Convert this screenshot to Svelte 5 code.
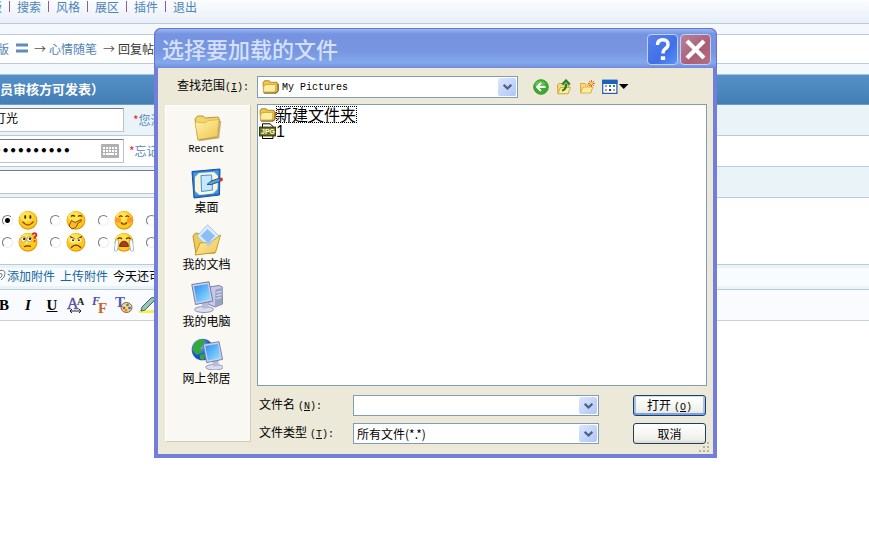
<script>
  const nav = ['排版', '搜索', '风格', '展区', '插件', '退出'];
  const moods = [
    ['smile', 'giggle', 'blush', 'cool'],
    ['doubt', 'angry', 'cry', 'sleep']
  ];
  const places = [
    { id: 'recent', name: 'Recent' },
    { id: 'desktop', name: '桌面' },
    { id: 'docs', name: '我的文档' },
    { id: 'computer', name: '我的电脑' },
    { id: 'network', name: '网上邻居' }
  ];
  let mood = $state('smile');
  let user = $state('灯光');
  let pass = $state('abcdefghij');
  let subject = $state('');
  let fileName = $state('');
</script>

{#snippet folder(size)}
  <svg width={size} height={size} viewBox="0 0 16 16" aria-hidden="true">
    <path d="M1 4.5 2.5 2.5H6.5L7.8 4H13.5L14.5 5V12.5L13.5 13.5H1.5Z" fill="#f0c850" stroke="#b98d28" />
    <path d="M1.5 13.3V8L3.5 6H13L12.8 12.2 11.5 13.3Z" fill="#ffee9e" stroke="#d8ae48" />
    <path d="M2 14.3H13.5L15.4 12V5.5" fill="none" stroke="#6e5a26" stroke-width=".9" />
  </svg>
{/snippet}

{#snippet chevron()}
  <span class="chev">
    <svg width="9" height="6" viewBox="0 0 9 6" aria-hidden="true"><path d="M.7.8 4.5 4.5 8.3.8" fill="none" stroke="#4d6185" stroke-width="2.2" /></svg>
  </span>
{/snippet}

{#snippet face(kind)}
  <svg width="20" height="20" viewBox="0 0 20 20" aria-hidden="true">
    <circle cx="10" cy="10.3" r="9.4" fill="#e39a10" />
    <circle cx="9.8" cy="9.7" r="8.7" fill="#ffc81a" />
    <ellipse cx="8.5" cy="7" rx="6.4" ry="5" fill="#ffe450" />
    {#if kind === 'smile'}
      <ellipse cx="7.2" cy="7" rx="1" ry="2" fill="#4a2a08" /><ellipse cx="12.4" cy="7" rx="1" ry="2" fill="#4a2a08" />
      <path d="M4.5 11.5Q10 18.5 15.5 11.5" fill="none" stroke="#7a3c06" stroke-width="1.2" />
    {:else if kind === 'giggle'}
      <path d="M5 6.5Q7 4.5 9 6.5M12 6.5Q14 4.5 16 6.5" fill="none" stroke="#5b3208" stroke-width="1.2" />
      <path d="M3 16 5.5 10.5 9 12.5 15 9.5 15.5 11 11.5 13.5Q11 18.5 6 18.8Z" fill="#ffb52c" stroke="#8b4a08" />
    {:else if kind === 'blush'}
      <circle cx="4.3" cy="10" r="2.8" fill="#ff8a2c" opacity=".8" /><circle cx="15.6" cy="10" r="2.8" fill="#ff8a2c" opacity=".8" />
      <path d="M5 7Q6.7 4.7 8.4 7M11.6 7Q13.3 4.7 15 7M7 12.5Q10 16 13 12.5" fill="none" stroke="#6b3908" stroke-width="1.2" />
    {:else if kind === 'doubt'}
      <circle cx="5.5" cy="7.5" r="2.6" fill="#fff" stroke="#9a6a10" stroke-width=".6" /><circle cx="11.5" cy="7.2" r="2.6" fill="#fff" stroke="#9a6a10" stroke-width=".6" />
      <circle cx="6.2" cy="7" r="1.2" fill="#222" /><circle cx="12" cy="6.7" r="1.2" fill="#222" />
      <path d="M6 14.8Q10 13 13 14.4" fill="none" stroke="#6b3908" stroke-width="1.2" />
      <path d="M14.2 2.5Q16.5.2 18.2 2.2 19 4 16.6 5.3V6.8M16.6 8.2V9.8" fill="none" stroke="#e0261c" stroke-width="1.9" />
    {:else if kind === 'angry'}
      <path d="M4 4.5 8.5 7M16 4.5 11.5 7" stroke="#5b3208" stroke-width="1.3" />
      <circle cx="6.6" cy="8.2" r="2" fill="#fff" /><circle cx="13.2" cy="8.2" r="2" fill="#fff" />
      <circle cx="7" cy="8.2" r="1" fill="#222" /><circle cx="12.8" cy="8.2" r="1" fill="#222" />
      <path d="M5 15.8Q10 10.5 15 15.8" fill="none" stroke="#6b3908" stroke-width="1.4" />
    {:else if kind === 'cry'}
      <path d="M3.5 7Q6 4.6 8 7M12 7Q14.4 4.6 16.5 7" fill="none" stroke="#5b3208" stroke-width="1.2" />
      <path d="M5.5 14.5Q6 9.2 10 9.2T14.5 14.5Z" fill="#b6332c" stroke="#5b2308" stroke-width=".8" />
      <path d="M3 9.5 2 17.5M17 9.5 18 17.5" stroke="#8fa6c4" stroke-width="3.8" stroke-linecap="round" />
      <path d="M3 9.5 2 17.5M17 9.5 18 17.5" stroke="#fff" stroke-width="2.4" stroke-linecap="round" />
    {/if}
  </svg>
{/snippet}

{#snippet screen()}
  <ellipse cx="13" cy="28.5" rx="9.5" ry="3" fill="#dcdef0" stroke="#8c90b4" />
  <path d="M10 21 17 20 18 27 12 28Z" fill="#b9bcd8" />
  <path d="M.8 3.5 18 .8 21.8 20 4.5 23.5Z" fill="#cdd1ea" stroke="#7479a8" />
  <path d="M3 5.3 16.8 3 19.6 18.4 5.8 21.2Z" fill="url(#scr)" />
{/snippet}

{#snippet place(id)}
  <svg width="32" height="32" viewBox="0 0 32 32" aria-hidden="true">
    <defs>
      <linearGradient id="fold" x2="1" y2="1"><stop stop-color="#fff3ae" /><stop offset="1" stop-color="#efc54c" /></linearGradient>
      <linearGradient id="scr" x2="1" y2="1"><stop stop-color="#2e8df2" /><stop offset="1" stop-color="#9be5ff" /></linearGradient>
      <radialGradient id="globe" cx=".35" cy=".3"><stop stop-color="#8fc4ff" /><stop offset="1" stop-color="#1453c4" /></radialGradient>
    </defs>
    {#if id === 'recent'}
      <path d="M8 30.5 27.5 27.5 29.5 11" fill="none" stroke="#8a8160" stroke-width="1.5" opacity=".6" />
      <path d="M4 9 6.5 6H12L14.5 8 27 7 28.5 9.5 26.5 27 7 30Z" fill="#f3d468" stroke="#bd9433" />
      <path d="M4 12 14.5 13 17 10.5 28 9.5 26.5 26.5 7 29.5Z" fill="url(#fold)" stroke="#d5ab3d" stroke-width=".7" />
    {:else if id === 'desktop'}
      <path d="M1 4.5 29 2 28.5 28 3 31Z" fill="#2b78d4" stroke="#1454a0" />
      <path d="M2.5 6 27.5 3.5 27 26 4 28.8Z" fill="#4a98e6" />
      <path d="M8 6 23 5 27 9 26.5 22 22 26.5 8.5 28 4 24V10Z" fill="#fbf6d8" />
      <path d="M10 8.5 20.5 8 21.5 23 10.5 24.5Z" fill="#c5e7ff" stroke="#3f94e0" />
      <path d="M16 17.5 20 14 29 11V14.5L20.5 17.5Z" fill="#58a0dc" stroke="#174f8c" stroke-width=".9" />
      <circle cx="30" cy="12.5" r="1.9" fill="#c43838" />
    {:else if id === 'docs'}
      <path d="M2 12 4.5 9 10 10 12 13 27 12 24 29 5 30Z" fill="#f1cb59" stroke="#bd9433" />
      <path d="M6 12 16.5.8 28 12 18 24Z" fill="#d8edff" stroke="#a5c6e8" />
      <path d="M9.5 12 16.5 5 24 12 17 19Z" fill="#8dbdf2" />
      <path d="M4 31 9 19 20 18 29.5 11 24.5 28.5Z" fill="url(#fold)" stroke="#c79b33" />
      <path d="M13 18.5 23 16 18 23Z" fill="#a8cbee" opacity=".8" />
    {:else if id === 'computer'}
      <path d="M18 6 28 4.5 32 6.5 31.5 23 24 26 17 23Z" fill="#c6cae4" stroke="#7c81ab" />
      <path d="M24.5 8.5 31.5 7 31 22.5 24 25.5Z" fill="#9ca2c8" />
      <path d="M25.5 11.5 30.5 10.5M25.5 14.5 30.5 13.5M25.5 17.5 30 16.5" stroke="#e8eafa" />
      <circle cx="29" cy="20.5" r="1" fill="#52d43b" />
      {@render screen()}
    {:else}
      <circle cx="11.5" cy="11.5" r="10.8" fill="url(#globe)" />
      <path d="M3 6Q8 0 14 2L13 7 9 10 11 14 6 17 3 14 1.5 11ZM9 17 14 16 13 22 9 21Z" fill="#35a936" />
      <g transform="translate(11.5 3) scale(.92)">{@render screen()}</g>
    {/if}
  </svg>
{/snippet}

<div class="page">
  <nav class="top">
    {#each nav as item, i}
      {#if i}<i class="bar"></i>{/if}<a href="#top">{item}</a>
    {/each}
  </nav>
  <div class="crumbs">
    <a href="#board">版</a>
    <svg width="12" height="11" viewBox="0 0 12 11" aria-hidden="true"><path d="M0 2H12M0 8H12" stroke="#5c8cc0" stroke-width="3" /></svg>
    <span class="arrow">→</span><a href="#notes">心情随笔</a><span class="arrow">→</span><span>回复帖子</span>
  </div>
  <form class="post">
    <h2>员审核方可发表）</h2>
    <div class="row tint">
      <input class="field" aria-label="用户名" bind:value={user} />
      <span class="hint"><b>*</b>您没有登录</span>
    </div>
    <div class="row">
      <span class="pw">
        <input class="field" type="password" aria-label="密码" bind:value={pass} />
        <svg width="18" height="14" viewBox="0 0 18 14" aria-hidden="true">
          <rect width="18" height="14" rx="1" fill="#b1b1b1" />
          <path d="M2 4H16M2 7H16" stroke="#fff" stroke-width="2" stroke-dasharray="2 1" />
          <path d="M2 10H4M5 10H13M14 10H16" stroke="#fff" stroke-width="2" />
        </svg>
      </span>
      <span class="hint"><b>*</b>忘记密码</span>
    </div>
    <div class="row tint"><input class="field wide" aria-label="标题" bind:value={subject} /></div>
    <div class="moods">
      {#each moods as line}
        <div class="moodline">
          {#each line as m}
            <label><input type="radio" name="mood" value={m} aria-label={m} bind:group={mood} />{@render face(m)}</label>
          {/each}
        </div>
      {/each}
    </div>
    <div class="attach">
      <svg width="6" height="14" viewBox="0 0 6 14" aria-hidden="true"><path d="M0 1.5Q5 .5 5 4.5T1 11M0 4.5Q2.5 4 2 7L0 9" fill="none" stroke="#777" /></svg>
      <a href="#add">添加附件</a><a href="#upload">上传附件</a><span>今天还可上传</span>
    </div>
    <div class="tools">
      <button type="button"><b>B</b></button>
      <button type="button"><b><i>I</i></b></button>
      <button type="button"><b><u>U</u></b></button>
      <button type="button" aria-label="字号">
        <svg width="18" height="18" viewBox="0 0 18 18"><text x="0" y="13" font-size="16" fill="#5b4fb0" stroke="#5b4fb0" stroke-width=".5">A</text><text x="10" y="9" font-size="10" font-weight="bold" fill="#222">A</text><path d="M3 15H14M5 13 3 15 5 17M12 13 14 15 12 17" fill="none" stroke="#222" /></svg>
      </button>
      <button type="button" aria-label="字体">
        <svg width="18" height="18" viewBox="0 0 18 18"><text x="1" y="9" font-size="12" font-style="italic" font-weight="bold" fill="#5648a8">F</text><text x="7" y="17" font-size="15" font-weight="bold" fill="#c8642a">F</text></svg>
      </button>
      <button type="button" aria-label="颜色">
        <svg width="18" height="18" viewBox="0 0 18 18"><ellipse cx="11.5" cy="11.5" rx="5.5" ry="5" fill="#ecd3a0" stroke="#8a6232" /><circle cx="9" cy="12" r="1.3" fill="#d33" /><circle cx="12.5" cy="9" r="1.3" fill="#3a9a3a" /><circle cx="14.5" cy="12" r="1.3" fill="#36c" /><circle cx="11" cy="14.4" r="1.3" fill="#e08a1a" /><text x="0" y="11" font-size="15" font-weight="bold" fill="#4c5cb8">T</text></svg>
      </button>
      <button type="button" aria-label="高亮">
        <svg width="18" height="18" viewBox="0 0 18 18"><path d="M0 15.5H18" stroke="#f6f04a" stroke-width="3" /><path d="M3 11 12 2 16 1 15 5 6 14 2 15Z" fill="#9fc5ae" stroke="#2f6b78" /></svg>
      </button>
    </div>
  </form>
</div>

<section class="dialog" role="dialog" aria-labelledby="dlg-title">
  <header>
    <h1 id="dlg-title">选择要加载的文件</h1>
    <button class="cap help" aria-label="帮助">
      <svg width="29" height="29" viewBox="0 0 29 29"><path d="M9.5 10Q9.5 4.8 14.8 4.8T20 9.6Q20 12 17.2 13.8 15 15.3 15 18.6" fill="none" stroke="#fff" stroke-width="3.4" /><path d="M15 21.3V25" stroke="#fff" stroke-width="4.4" /></svg>
    </button>
    <button class="cap close" aria-label="关闭">
      <svg width="29" height="29" viewBox="0 0 29 29"><path d="M6 6 23 23M23 6 6 23" stroke="#fff" stroke-width="4.2" /></svg>
    </button>
  </header>
  <div class="body">
    <div class="bar-row">
      <label for="look">查找范围<span class="lat">(<u>I</u>):</span></label>
      <div class="combo look">
        <span class="lead">{@render folder(17)}</span>
        <select id="look"><option>My Pictures</option></select>
        {@render chevron()}
      </div>
      <div class="nav-icons">
        <button aria-label="后退"><svg width="16" height="16" viewBox="0 0 16 16"><circle cx="8" cy="8" r="7.3" fill="#3dab2f" stroke="#3a9a30" /><ellipse cx="7" cy="5" rx="5" ry="3" fill="#7bd56a" opacity=".6" /><path d="M12.5 8H4.5M8 4 4 8 8 12" fill="none" stroke="#fff" stroke-width="1.8" /></svg></button>
        <button aria-label="向上"><svg width="16" height="16" viewBox="0 0 16 16"><path d="M1.5 6 3 4.5H7L8 6H13L12 14.5H2Z" fill="#f9dc72" stroke="#c9a03c" /><path d="M1.8 14.8 4.5 8.5H14.5L12 14.8Z" fill="#ffeea2" stroke="#d2aa48" /><path d="M6 11.5Q10.2 11 10.2 4.5M6.3 5.5 10 1.5 13.8 5.5" fill="none" stroke="#237f22" stroke-width="2.2" /></svg></button>
        <button aria-label="新建文件夹"><svg width="16" height="16" viewBox="0 0 16 16"><path d="M1.5 4.5H6L7 6H12V13.5H1.5Z" fill="#f9dc72" stroke="#d4ac4a" /><path d="M1.5 14 4 8H14L11.5 14Z" fill="#ffeea2" stroke="#dab04c" /><path d="M12.5 1V8M9 4.5H16M10 2 15 7M15 2 10 7" stroke="#e8602c" /><circle cx="12.5" cy="4.5" r="1.4" fill="#ffd84a" /></svg></button>
        <button aria-label="查看"><svg width="27" height="16" viewBox="0 0 27 16"><rect x=".7" y="1.2" width="14.2" height="13.2" fill="#fff" stroke="#1e5fb4" stroke-width="1.2" /><path d="M0 3H15.5" stroke="#1e62bc" stroke-width="4" /><path d="M3 7H5" stroke="#8aa0c0" stroke-width="2" /><path d="M7 7H9" stroke="#2c7ad0" stroke-width="2" /><path d="M11 7H13" stroke="#2b9a3a" stroke-width="2" /><path d="M3 11H5" stroke="#d98a80" stroke-width="2" /><path d="M7 11H9" stroke="#233c8c" stroke-width="2" /><path d="M11 11H13" stroke="#d0a040" stroke-width="2" /><path d="M17 5H26.5L21.7 10Z" fill="#000" /></svg></button>
      </div>
    </div>
    <div class="main">
      <div class="places">
        {#each places as p}
          <button>{@render place(p.id)}<span class:lat={p.id === 'recent'}>{p.name}</span></button>
        {/each}
      </div>
      <div class="right">
        <ul class="files">
          <li>{@render folder(17)}<span class="focus">新建文件夹</span></li>
          <li>
            <svg width="17" height="17" viewBox="0 0 17 17" aria-hidden="true">
              <path d="M3.5.8H11L14 3.5V15.5H3.5Z" fill="#fff" stroke="#000" />
              <rect x=".6" y="4.1" width="15.8" height="8.8" fill="#77790f" stroke="#26270a" />
              <text x="2" y="11" font-family="Liberation Sans" font-size="7" font-weight="bold" fill="#fff">JPG</text>
            </svg><span class="num">1</span>
          </li>
        </ul>
        <div class="form">
          <label for="fname">文件名<span class="lat name">(<u>N</u>):</span></label>
          <div class="combo"><input id="fname" bind:value={fileName} />{@render chevron()}</div>
          <button class="push default">打开<span class="lat name">(<u>O</u>)</span></button>
          <label for="ftype">文件类型<span class="lat name">(<u>T</u>):</span></label>
          <div class="combo"><select id="ftype"><option>所有文件(*.*)</option></select>{@render chevron()}</div>
          <button class="push">取消</button>
        </div>
      </div>
    </div>
    <svg class="grip" width="11" height="11" viewBox="0 0 11 11" aria-hidden="true"><path d="M8 1H10M4 5H6M8 5H10M0 9H2M4 9H6M8 9H10" stroke="#b8b4a0" stroke-width="2" /></svg>
  </div>
</section>

<style>
  :global(body) { background: #fff; overflow: hidden; }
  .page, .dialog {
    font: 12px/16px "Noto Sans CJK SC", sans-serif;
    color: #000;
  }
  .page *, .dialog, .dialog * { box-sizing: border-box; }
  a { color: #4f83b4; text-decoration: none; white-space: nowrap; }
  svg { display: block; flex: none; }
  button { font: inherit; color: inherit; margin: 0; padding: 0; border: 0; background: none; }
  input, select { font: inherit; color: inherit; margin: 0; }
  .lat { font-family: "Liberation Mono", monospace; font-size: 10px; white-space: pre; }
  .name { padding-left: 3px; }

  .page { overflow: hidden; background: #f4f8fc; }
  .top {
    display: flex; align-items: center; gap: 7px;
    height: 24px; padding-bottom: 10px; margin-left: -22px;
    border-bottom: 1px solid #b9cbd9;
    background: linear-gradient(#fbfdff, #e9eff8);
  }
  .bar { width: 1px; height: 11px; background: #93589c; }
  .crumbs {
    display: flex; align-items: center;
    height: 30px; margin: 10px 0 10px -3px; padding-bottom: 1px;
    background: #fff; border: solid #b9cbd9; border-width: 1px 0;
    color: #333; white-space: nowrap;
  }
  .crumbs svg { margin: 0 6px 0 7px; }
  .arrow { width: 15px; color: #555; }
  .crumbs a + .arrow { margin-left: 6px; }

  .post { background: #fff; border-bottom: 1px solid #c5cfe0; }
  h2 {
    height: 31px; margin: 0;
    border-top: 1px solid #9cc4e4; border-bottom: 1px solid #6b9cc8;
    background: linear-gradient(#5590c6, #437eb5);
    color: #fff; font-size: 13px; line-height: 27px; font-weight: 700;
  }
  .row {
    display: flex; align-items: center; gap: 9px;
    height: 31px; border-bottom: 1px solid #b9cbd9; white-space: nowrap;
  }
  .tint { background: #eaf4f8; }
  .field {
    width: 132px; height: 24px; margin-left: -8px; padding: 0 0 6px 1px;
    border: 1px solid #bcc4ca; border-top-color: #777c80; background: #fff; outline: 0;
  }
  .wide { width: 640px; }
  .pw { display: flex; align-items: center; }
  .pw .field { padding-bottom: 0; font-family: "DejaVu Sans", sans-serif; font-weight: 700; }
  .pw svg { margin: 0 5px 0 -23px; }
  .pw + .hint { margin-left: -4px; }
  .hint { color: #5a8ab4; }
  .hint b { color: #e22; font-weight: 400; }
  .moods { display: flex; flex-direction: column; gap: 2px; height: 67px; padding-top: 12px; border-bottom: 1px solid #b9cbd9; }
  .moodline { display: flex; }
  .moodline label { display: flex; align-items: center; width: 48px; gap: 5px; padding-left: 2px; }
  .moodline input {
    appearance: none; width: 11px; height: 11px; border-radius: 50%;
    border: 1px solid; border-color: #777 #eee #eee #777; background: #fff;
  }
  .moodline input:checked { background: radial-gradient(circle, #000 2px, #fff 3px); }
  .attach {
    display: flex; align-items: center; gap: 5px; height: 24px; padding-bottom: 3px;
    background: #f8fcff; border: solid #eaf4f8; border-width: 3px 0;
    white-space: nowrap;
  }
  .attach svg { margin-right: -4px; }
  .attach a { color: #17659f; }
  .tools {
    display: flex; align-items: center; gap: 6px; height: 31px; margin-left: -5px;
    background: #f9fbfe; border-top: 1px solid #b9cbd9;
    font: 15px/18px "Liberation Serif", serif;
  }
  .tools button { width: 18px; height: 18px; }

  .dialog {
    position: absolute; left: 154px; top: 28px; width: 563px;
    border: solid #737edb; border-width: 0 4px 4px; border-radius: 7px 7px 0 0;
    background: #ece9d8;
  }
  header {
    display: flex; align-items: flex-start; gap: 2px;
    height: 40px; margin: 0 -4px; padding: 5px 5px 0 7px;
    border-radius: 7px 7px 0 0; border: solid #6474cf; border-width: 1px 1px 0;
    background: linear-gradient(#9ab9f4, #7593e0 5px, #7795e0 22px, #83a8ec 34px, #7088da);
  }
  h1 { flex: 1; margin: 0; font-size: 22px; line-height: 29px; font-weight: 500; color: #d5e1fb; }
  .cap { width: 31px; height: 31px; border: 1px solid #c3cff5; border-radius: 4px; }
  .help { background: linear-gradient(135deg, #5a83ea, #3f70e8 60%, #5a92f5); }
  .close { background: linear-gradient(135deg, #b9819c, #ab5f77 60%, #b3707f); }
  .body { position: relative; padding: 0 6px 0 7px; }
  .bar-row { display: flex; align-items: center; height: 36px; padding: 1px 0 0 12px; }
  .bar-row label { width: 80px; padding-bottom: 1px; white-space: nowrap; }
  .combo {
    position: relative; display: flex; min-width: 0; height: 21px;
    border: 1px solid #7f9db9; background: #fff;
  }
  .look { width: 261px; height: 22px; }
  .combo input, .combo select {
    appearance: none; flex: 1; min-width: 0; width: 100%; border: 0; outline: 0;
    background: transparent; padding: 0 20px 0 3px;
  }
  .look select { padding-top: 2px; font-family: "Liberation Mono", monospace; font-size: 10px; }
  .lead { align-self: center; margin-left: 4px; }
  .chev {
    position: absolute; right: 1px; top: 1px; bottom: 1px; width: 18px;
    display: flex; align-items: center; justify-content: center; pointer-events: none;
    border-radius: 2px; background: linear-gradient(135deg, #dce6fe, #b0c6f6);
  }
  .nav-icons { display: flex; gap: 7px; margin-left: 15px; }
  .main { display: flex; gap: 6px; }
  .places {
    width: 86px; margin: 1px 0 12px; padding: 4px 3px 0 0;
    display: flex; flex-direction: column; gap: 9px;
    background: #f9f8f3; border: 1px solid;
    border-color: #fff #cfccba #cfccba #fff;
  }
  .places button { display: flex; flex-direction: column; align-items: center; height: 48px; }
  .places span { line-height: 16px; }
  .right { flex: 1; min-width: 0; }
  .files {
    min-height: 282px; margin: 0; padding: 1px; list-style: none;
    border: 1px solid #7f9db9; background: #fff; font-size: 16px;
  }
  .files li { display: flex; align-items: center; height: 17px; line-height: 15px; }
  .focus { outline: 1px dotted #000; outline-offset: -1px; padding: 1px 1px 1px 0; }
  .num { font-family: "Liberation Sans", sans-serif; }
  .form {
    display: grid; grid-template-columns: 94px 246px 107px; grid-auto-rows: 21px;
    row-gap: 7px; align-items: center; padding: 9px 0 10px 2px;
  }
  .push {
    justify-self: end; width: 73px; height: 21px;
    border: 1px solid #1b3f66; border-radius: 3px; line-height: 18px;
    background: linear-gradient(#fff, #f0f0ea 80%, #dcd8cc);
  }
  .default { box-shadow: inset 0 1px #cee0fb, inset 0 -2px #7ba2e7, inset 2px 0 #a3c0f3, inset -2px 0 #a3c0f3; }
  .grip { position: absolute; right: 3px; bottom: 1px; }
</style>
